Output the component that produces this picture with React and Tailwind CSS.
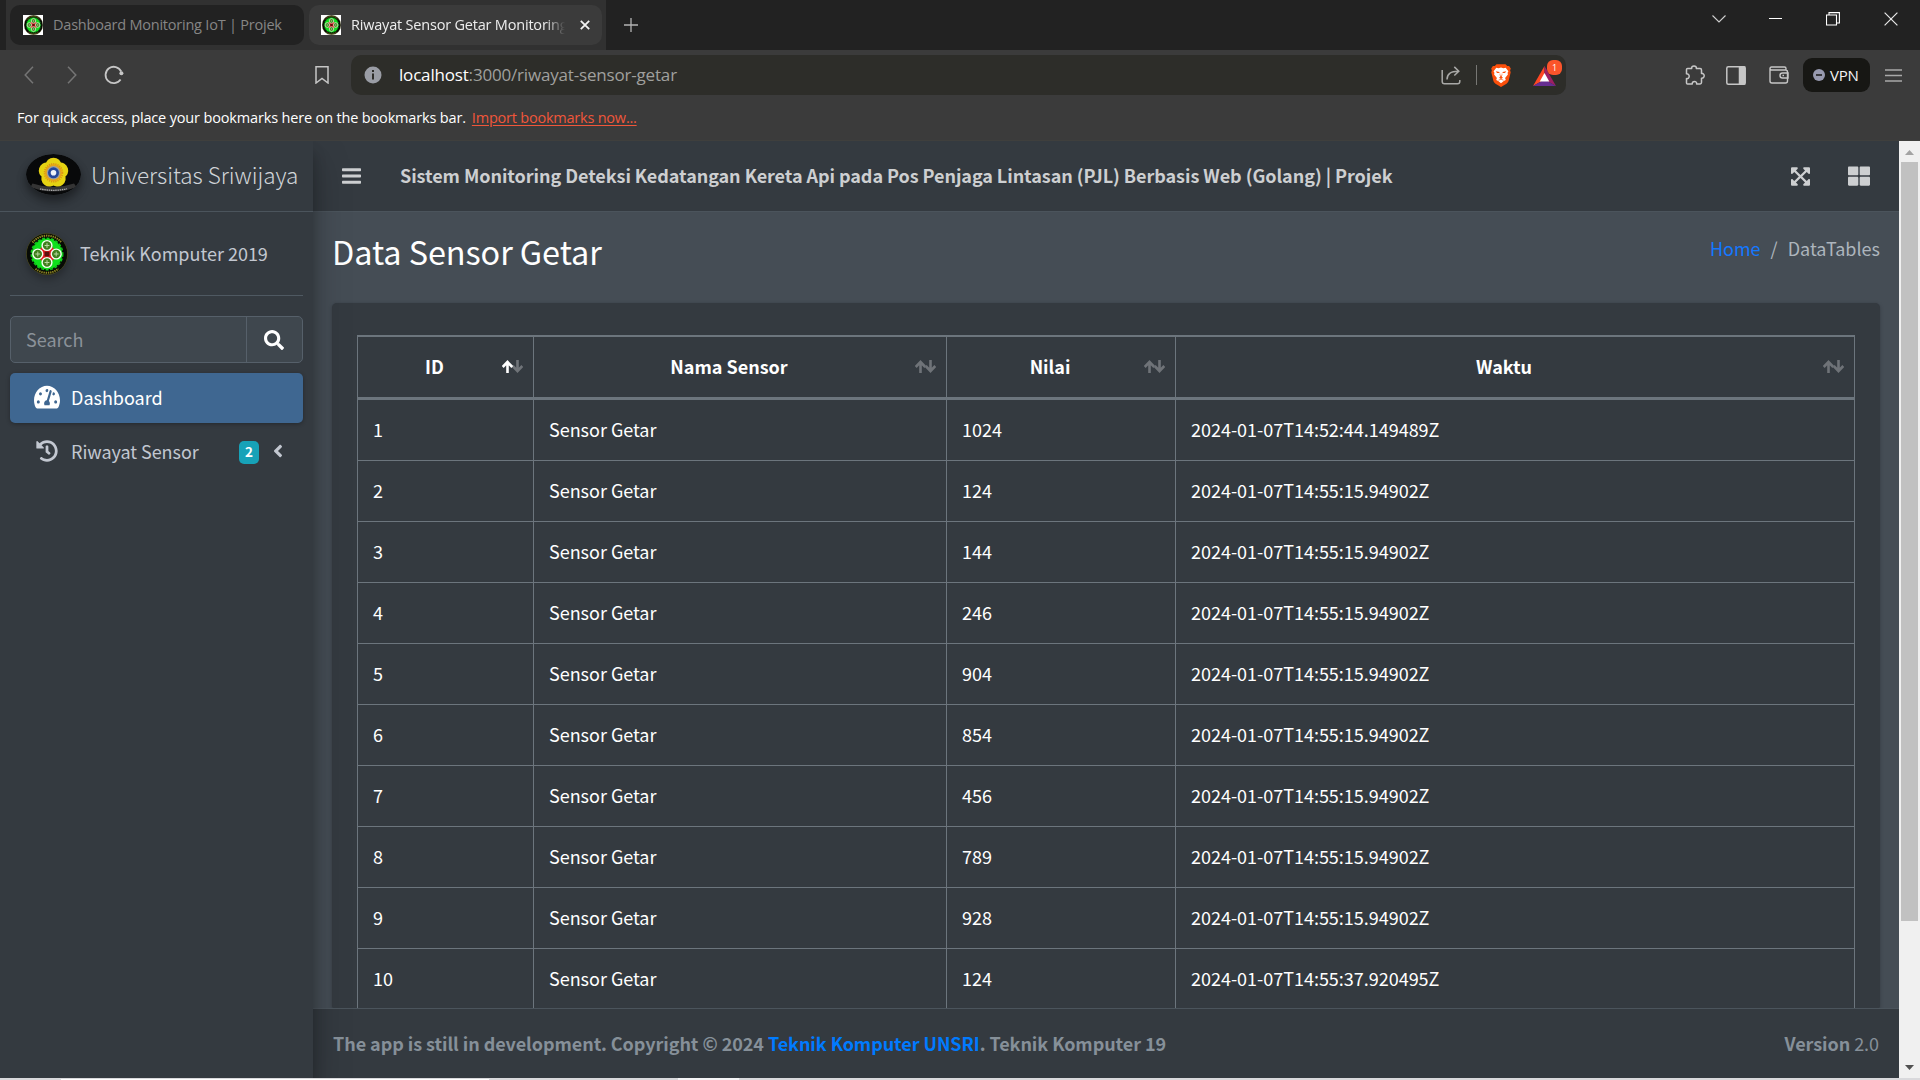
import React from "react";
import {
  FaBars,
  FaExpandArrowsAlt,
  FaThLarge,
  FaSearch,
  FaTachometerAlt,
  FaHistory,
  FaAngleLeft,
} from "react-icons/fa";

const SEGOE = "font-['Open_Sans','Noto_Sans',sans-serif]";
const SOURCE = "font-['Noto_Sans_CJK_SC',sans-serif]";

const ROWS = [
  ["1", "Sensor Getar", "1024", "2024-01-07T14:52:44.149489Z"],
  ["2", "Sensor Getar", "124", "2024-01-07T14:55:15.94902Z"],
  ["3", "Sensor Getar", "144", "2024-01-07T14:55:15.94902Z"],
  ["4", "Sensor Getar", "246", "2024-01-07T14:55:15.94902Z"],
  ["5", "Sensor Getar", "904", "2024-01-07T14:55:15.94902Z"],
  ["6", "Sensor Getar", "854", "2024-01-07T14:55:15.94902Z"],
  ["7", "Sensor Getar", "456", "2024-01-07T14:55:15.94902Z"],
  ["8", "Sensor Getar", "789", "2024-01-07T14:55:15.94902Z"],
  ["9", "Sensor Getar", "928", "2024-01-07T14:55:15.94902Z"],
  ["10", "Sensor Getar", "124", "2024-01-07T14:55:37.920495Z"],
];

const COLS = "grid grid-cols-[176px_413px_229px_679px]";

function DepartmentLogo({ className }) {
  const nodes = [
    [21, 12.5],
    [11.8, 21],
    [30.2, 21],
    [21, 29.5],
  ];
  return (
    <svg viewBox="0 0 42 42" preserveAspectRatio="none" className={className}>
      <circle cx="21" cy="21" r="20.7" fill="#070a05" stroke="#5f5c1a" strokeWidth="0.6" />
      <path d="M6.500 9.500a18.700 18.700 0 0 1 29 0" fill="none" stroke="#b3a52c" strokeWidth="2" strokeDasharray="1.400 .8" opacity="0.8" />
      <path d="M9.500 35.800a18.700 18.700 0 0 0 23 0" fill="none" stroke="#b3a52c" strokeWidth="2" strokeDasharray="1.400 .8" opacity="0.8" />
      <circle cx="21" cy="21" r="15.800" fill="none" stroke="#12c61b" strokeWidth="1.4" strokeDasharray="3 1.6" />
      <circle cx="21" cy="21" r="15.300" fill="#0fe01c" />
      <path d="M15 15 27 27M27 15 15 27" stroke="#e51b24" strokeWidth="4" />
      <rect x="16" y="16" width="10" height="10" fill="#e51b24" />
      {nodes.map(([x, y]) => (
        <g key={`${x}-${y}`}>
          <circle cx={x} cy={y} r="4.900" fill="#3f7f1c" stroke="#f5fff0" strokeWidth="1.400" />
          <path d={`M${x - 2.4} ${y}h4.8M${x} ${y - 2.4}v4.8`} stroke="#b9d8a0" strokeWidth="1" />
        </g>
      ))}
      <rect x="18.6" y="18.6" width="4.8" height="4.8" fill="#5c0f0c" />
    </svg>
  );
}

function Favicon() {
  return (
    <span className="flex h-5 w-5 shrink-0 items-center justify-center bg-white">
      <DepartmentLogo className="h-5 w-[19px]" />
    </span>
  );
}

function UniversityLogo() {
  return (
    <svg viewBox="0 0 55 41" className="h-[41px] w-[55px] rounded-[50%] shadow-[0_4px_8px_rgba(0,0,0,0.3),0_8px_12px_rgba(0,0,0,0.2)]">
      <ellipse cx="27.5" cy="20.5" rx="27.5" ry="20.5" fill="#08090a" />
      <path d="M6.500 29.500q21 7 41.500 0l2.500 3.500q-23 9-46 0z" fill="#343434" />
      {[0, 72, 144, 216, 288].map((a) => (
        <ellipse key={a} cx="27.5" cy="11" rx="7.800" ry="7.300" fill="#e6d312" transform={`rotate(${a} 27.5 18.8)`} />
      ))}
      <path d="M14 34.800q13 3 27 0" stroke="#a9a9a9" strokeWidth="1.300" strokeDasharray="1.500 .7" fill="none" />
      <circle cx="27.5" cy="18.8" r="8.500" fill="#e7a418" />
      <circle cx="27.5" cy="18.8" r="9" fill="none" stroke="#dd9316" strokeWidth="1.600" strokeDasharray="1.200 1" />
      <circle cx="27.5" cy="18.8" r="6.800" fill="#9aa0a0" />
      <circle cx="27.5" cy="18.8" r="5.500" fill="#24479c" />
      <circle cx="27.5" cy="18.8" r="2.800" fill="#eef2f8" />
    </svg>
  );
}

function BraveIcon() {
  return (
    <svg viewBox="0 0 20 23" className="ml-[14px] h-[23px] w-5">
      <path d="M5.500.3h9l1.700 1.800 1.900-.1 1.700 2.500-.7 1.900.6 1.800-2 8.400c-.4 1.500-1.100 2.300-2.200 3.100L10 23l-5.500-3.300c-1.100-.8-1.800-1.600-2.200-3.100L.3 8.200l.6-1.800-.7-1.900L1.900 2l1.900.1z" fill="#fb4f0b" />
      <path d="M5.300 3.700 7.600 4.200 10 3.500l2.400.7 2.300-.5 2.700 3.600-.8 1.500.3 1.700-2.800 3.600.7 1.900-2 .9-2.800 2.400-2.800-2.400-2-.9.700-1.900-2.800-3.600.3-1.700-.8-1.500z" fill="#fff" />
      <path d="M4.800 7.200 8.400 8v1L6 9zM15.200 7.200 11.600 8v1l2.400 0zM9 8.500 8.700 11l.6 1.700L8 13.700 10 15l2-1.300-1.300-1L11.300 11 11 8.500l-.4 3.300h-1.200z" fill="#fb4f0b" />
      <path d="m7.500 16.200 2.500-1 2.500 1" fill="none" stroke="#fb4f0b" strokeWidth=".7" />
    </svg>
  );
}

function TabStrip() {
  return (
    <div className={`flex h-[50px] bg-[#222222] pl-[6px] text-[14.5px] ${SEGOE}`}>
      <div className="flex w-[600px] items-start gap-[5px] bg-[#313131] pl-1 pt-[5px]">
        <div className="flex h-10 w-[294px] items-center rounded-[10px] bg-[#222222] pl-[13px]">
          <Favicon />
          <span className="ml-[10px] whitespace-nowrap tracking-[-0.22px] text-[#868686]">Dashboard Monitoring IoT | Projek</span>
        </div>
        <div className="flex h-10 w-[293px] items-center rounded-[10px] bg-[#3b3b3b] pl-3">
          <Favicon />
          <span className="ml-[10px] w-[214px] overflow-hidden whitespace-nowrap tracking-[-0.2px] text-[#ededed] [mask-image:linear-gradient(90deg,#000_91%,transparent)]">
            Riwayat Sensor Getar Monitoring
          </span>
          <svg viewBox="0 0 10 10" className="ml-[15px] h-[10px] w-[10px]" stroke="#f2f2f2" strokeWidth="1.8">
            <path d="M.8.8 9.2 9.2M9.2.8.8 9.2" />
          </svg>
        </div>
      </div>
      <svg viewBox="0 0 14 14" className="ml-[18px] mt-[18px] h-[14px] w-[14px]" stroke="#b4b4b4" strokeWidth="1.3">
        <path d="M7 0v14M0 7h14" />
      </svg>
      <div className="ml-auto flex h-[37px] items-center pr-[22px]">
        <svg viewBox="0 0 14 8" className="h-2 w-[14px]" fill="none" stroke="#d0d0d0" strokeWidth="1.1">
          <path d="M.5.5 7 7 13.500.5" />
        </svg>
        <span className="ml-[43px] h-px w-[13px] bg-white" />
        <svg viewBox="0 0 14 14" className="ml-[44px] h-[14px] w-[14px]" fill="none" stroke="#fff" strokeWidth="1.1">
          <path d="M.5 3h10v10H.5zM3 3V.6h10.400V11H11" />
        </svg>
        <svg viewBox="0 0 14 14" className="ml-[44px] h-[14px] w-[14px]" stroke="#e8e8e8" strokeWidth="1.2">
          <path d="M.6.6 13.400 13.400M13.400.6.6 13.400" />
        </svg>
      </div>
    </div>
  );
}

function Toolbar() {
  return (
    <div className={`flex h-[50px] items-center bg-[#3b3b3b] pr-[18px] ${SEGOE}`}>
      <svg viewBox="0 0 10 18" className="ml-6 h-[18px] w-[10px]" fill="none" stroke="#757575" strokeWidth="1.5">
        <path d="M9 .8 1.200 9 9 17.200" />
      </svg>
      <svg viewBox="0 0 10 18" className="ml-[33px] h-[18px] w-[10px]" fill="none" stroke="#757575" strokeWidth="1.500">
        <path d="M1 .8 8.800 9 1 17.200" />
      </svg>
      <svg viewBox="0 0 20 20" className="ml-[27px] h-5 w-5" fill="none" stroke="#c6c6c6" strokeWidth="1.800">
        <path d="M16.600 14.500A8.200 8.200 0 1 1 17.200 6.500" />
        <circle cx="17.400" cy="8.300" r="2" fill="#c6c6c6" stroke="none" />
      </svg>
      <svg viewBox="0 0 14 18" className="ml-[191px] h-[18px] w-[14px]" fill="none" stroke="#c6c6c6" strokeWidth="1.500">
        <path d="M1 .8h12v16.200l-6-4.500-6 4.500z" />
      </svg>
      <div className="ml-[22px] flex h-10 w-[1215px] items-center rounded-[10px] bg-[#2d2d29] pl-[13px] pr-1">
        <svg viewBox="0 0 18 18" className="h-[18px] w-[18px]">
          <circle cx="9" cy="9" r="8.500" fill="#9a9da5" />
          <path d="M9 4v2M9 7.500v6" stroke="#2d2d29" strokeWidth="2" />
        </svg>
        <span className="ml-[17px] whitespace-nowrap text-[17px] tracking-[-0.18px] text-[#a0a09e]">
          <span className="text-white">localhost</span>:3000/riwayat-sensor-getar
        </span>
        <svg viewBox="0 0 20 19" className="ml-auto h-[19px] w-5" fill="none" stroke="#a9a9a7" strokeWidth="1.500">
          <path d="M1.200 4v11.500q0 2.300 2.300 2.300h13q2.300 0 2.300-2.300V14" />
          <path d="M6 13.500C6 8 9.500 5.200 17.500 5.200M13.300.9l4.500 4.300-4.500 4.300" />
        </svg>
        <span className="ml-[15px] h-5 w-[1.5px] bg-[#777774]" />
        <BraveIcon />
        <span className="relative ml-[22px] h-[23px] w-[29px]">
          <svg viewBox="0 0 23 20" className="mt-[2px] h-5 w-[23px]">
            <path d="M11.500 0 0 20 11.500 13.500z" fill="#ff4724" />
            <path d="M11.500 0 23 20 11.500 13.500z" fill="#9e1f63" />
            <path d="M0 20h23l-11.500-6.500z" fill="#662d91" />
            <path d="M11.500 7 6.700 15.500h9.600z" fill="#fff" />
          </svg>
          <span className="absolute -top-[4px] left-[14px] flex h-[15px] w-[15px] items-center justify-center rounded-[6px] bg-[#fb542b] text-[9px] leading-none text-white">1</span>
        </span>
      </div>
      <svg viewBox="0 0 20 20" className="ml-auto h-5 w-5" fill="none" stroke="#c6c6c6" strokeWidth="1.500" strokeLinejoin="round">
        <path d="M1.500 4.500q0-1 1-1h4.200C6.300 2 7.500.9 9 .9s2.700 1.100 2.300 2.600h3.800q1.400 0 1.400 1.400v3.500c1.500-.2 2.700.9 2.700 2.400s-1.200 2.600-2.700 2.400v4.300q0 1.400-1.400 1.400h-3.500c.3-1.400-.7-2.500-2.100-2.500s-2.500 1.100-2.200 2.500H2.500q-1 0-1-1v-4.300c1.600.2 2.700-.8 2.700-2.300S3.100 8.600 1.500 8.800z" />
      </svg>
      <svg viewBox="0 0 20 19" className="ml-[21px] h-[19px] w-5" fill="none" stroke="#c6c6c6" strokeWidth="1.500">
        <rect x=".8" y=".8" width="18.400" height="17.400" rx="1.500" />
        <path d="M13.500 1h5v17h-5z" fill="#c6c6c6" />
      </svg>
      <svg viewBox="0 0 20 18" className="ml-[23px] h-[18px] w-5" fill="none" stroke="#c6c6c6" strokeWidth="1.400">
        <path d="M1 2.500v12.500q0 2 2 2h13.500q2 0 2-2V6q0-2-2-2H2.500Q1 4 1 2.500T2.500 1h13q1.500 0 1.500 1.500V4" />
        <path d="M19 7h-5.500q-2.500 0-2.500 2.500t2.500 2.500H19zM13.500 9.500h1.500" />
      </svg>
      <div className="ml-[14px] flex h-[34px] w-[67px] items-center rounded-[9px] bg-[#171714] pl-[10px]">
        <svg viewBox="0 0 12 12" className="h-3 w-3">
          <circle cx="6" cy="6" r="6" fill="#9799ae" />
          <path d="M3 6h6" stroke="#171714" strokeWidth="1.500" />
        </svg>
        <span className="ml-[5px] text-[15px] tracking-[-0.2px] text-[#f4f4f4]">VPN</span>
      </div>
      <svg viewBox="0 0 17 13" className="ml-[15px] h-[13px] w-[17px]" stroke="#a9a9a9" strokeWidth="1.500">
        <path d="M0 1h17M0 6.500h17M0 12h17" />
      </svg>
    </div>
  );
}

function BookmarksBar() {
  return (
    <div className={`flex h-[41px] items-start whitespace-nowrap border-b border-[#3f3f3d] bg-[#3b3b3b] pl-[17px] pt-2 text-[14.5px] leading-5 text-white ${SEGOE}`}>
      <span className="tracking-[-0.16px]">For quick access, place your bookmarks here on the bookmarks bar.</span>
      <span className="ml-[6px] tracking-[-0.22px] text-[#f0563a] underline underline-offset-2">Import bookmarks now...</span>
    </div>
  );
}

function Sidebar() {
  return (
    <aside className="relative z-10 flex w-[313px] shrink-0 flex-col bg-[#343a40] shadow-[0_18px_35px_rgba(0,0,0,0.25),0_12px_12px_rgba(0,0,0,0.22)]">
      <div className="flex h-[71px] items-start border-b border-[#4b545c] pl-[26px] pt-[13px]">
        <UniversityLogo />
        <span className="ml-[10px] mt-px whitespace-nowrap text-[22.5px] font-light leading-[38px] tracking-[-0.02px] text-[#d0d4d8]">Universitas Sriwijaya</span>
      </div>
      <div className="mx-[10px] flex h-[84px] items-center border-b border-[#4f5962] pl-4">
        <DepartmentLogo className="h-[42px] w-[42px] rounded-full shadow-[0_4px_8px_rgba(0,0,0,0.3)]" />
        <span className="-mt-0.5 ml-3 whitespace-nowrap text-[18px] leading-6 text-[#c2c7d0]">Teknik Komputer 2019</span>
      </div>
      <div className="mx-[10px] mt-5 flex h-[47px] rounded-[5px] border border-[#56606a] bg-[#3f474e]">
        <span className="flex w-[236px] items-center border-r border-[#56606a] pb-0.5 pl-[15px] text-[18px] leading-6 text-[#8b9299]">Search</span>
        <span className="flex flex-1 items-center justify-center pr-0.5">
          <FaSearch className="h-5 w-5 text-white" />
        </span>
      </div>
      <nav className="mx-[10px] mt-[10px] flex flex-col text-[18px] leading-6">
        <span className="flex h-[50px] items-center rounded-[5px] bg-[#3f6791] pb-0.5 pl-6 text-white shadow-[0_1px_4px_rgba(0,0,0,0.3)]">
          <FaTachometerAlt className="h-[26px] w-[26px]" preserveAspectRatio="none" />
          <span className="ml-[11px]">Dashboard</span>
        </span>
        <span className="mt-1 flex h-[50px] items-center pb-0.5 pl-[26px] text-[#c2c7d0]">
          <FaHistory className="h-[22px] w-[22px]" />
          <span className="ml-[13px] whitespace-nowrap tracking-[-0.05px]">Riwayat Sensor</span>
          <span className="ml-auto mt-0.5 flex h-[23px] w-5 items-center justify-center rounded-[5px] bg-[#17a2b8] text-[13.5px] font-bold leading-none text-white">2</span>
          <FaAngleLeft className="ml-[9px] mr-[15px] h-5 w-5" />
        </span>
      </nav>
    </aside>
  );
}

function SortArrows({ active }) {
  return (
    <svg viewBox="0 0 21 13" className="absolute right-[10px] top-[23px] h-[13px] w-[21px]" fill="none" strokeWidth="2.600">
      <path d="M15.500 0v10.500M10.700 6l4.800 5 4.800-5" stroke="#6f7378" />
      <path d="M5.500 13V2.500M.7 7l4.800-5 4.800 5" stroke={active ? "#ffffff" : "#6f7378"} />
    </svg>
  );
}

function DataTable() {
  return (
    <div className="w-[1498px] border-l border-[#6c757d] text-[18px] leading-6 text-white">
      <div className={`${COLS} h-[65px] border-b-[3px] border-t-2 border-[#6c757d]`}>
        {["ID", "Nama Sensor", "Nilai", "Waktu"].map((h, i) => (
          <div key={h} className="relative flex items-center justify-center border-r border-[#6c757d] pb-0.5 pr-[22px] font-bold">
            {h}
            <SortArrows active={i === 0} />
          </div>
        ))}
      </div>
      {ROWS.map((r) => (
        <div key={r[0]} className={`${COLS} h-[61px] border-b border-[#6c757d]`}>
          {r.map((c, i) => (
            <div key={i} className="flex items-center border-r border-[#6c757d] pb-0.5 pl-[15px] tracking-[-0.02px]">
              {c}
            </div>
          ))}
        </div>
      ))}
    </div>
  );
}

function Content() {
  return (
    <div className="flex min-w-0 flex-1 flex-col bg-[#454d55]">
      <header className="flex h-[71px] shrink-0 items-center border-b border-[#4b545c] bg-[#343a40] pl-[29px] pr-[29px] text-[#cdcfd1]">
        <FaBars className="h-[20px] w-[19px]" preserveAspectRatio="none" />
        <span className="-mt-0.5 ml-[39px] whitespace-nowrap text-[18px] font-bold leading-6 tracking-[-0.055px]">
          Sistem Monitoring Deteksi Kedatangan Kereta Api pada Pos Penjaga Lintasan (PJL) Berbasis Web (Golang) | Projek
        </span>
        <FaExpandArrowsAlt className="ml-auto h-[21px] w-[19px]" preserveAspectRatio="none" />
        <FaThLarge className="ml-[38px] h-[22px] w-[22px]" preserveAspectRatio="none" />
      </header>
      <main className="flex min-h-0 flex-1 flex-col overflow-hidden pl-[19px] pr-[19px]">
        <div className="flex h-[91px] shrink-0 items-start justify-between pt-[15px]">
          <h1 className="text-[32.4px] leading-[48px] tracking-[-0.06px] text-white">Data Sensor Getar</h1>
          <div className="flex gap-[10px] pt-[9px] text-[18px] leading-6 text-[#adb5bd]">
            <span className="text-[#1478ff]">Home</span>
            <span>/</span>
            <span>DataTables</span>
          </div>
        </div>
        <section className="shrink-0 rounded-[5px] bg-[#343a40] pl-[25px] pt-8 shadow-[0_0_1px_rgba(0,0,0,0.125),0_1px_4px_rgba(0,0,0,0.2)]">
          <DataTable />
        </section>
      </main>
      <footer className="flex h-[70px] shrink-0 items-center justify-between border-t border-[#4b545c] bg-[#343a40] px-5 pb-0.5 text-[18px] leading-6 tracking-[-0.055px] text-[#869099]">
        <span className="whitespace-nowrap font-bold">
          The app is still in development. Copyright © 2024 <span className="text-[#007bff]">Teknik Komputer UNSRI</span>. Teknik Komputer 19
        </span>
        <span className="whitespace-nowrap">
          <span className="font-bold">Version</span> 2.0
        </span>
      </footer>
    </div>
  );
}

function Scrollbar() {
  return (
    <div className="flex w-[21px] shrink-0 flex-col items-center bg-[#f0f0f0]">
      <svg viewBox="0 0 9 5" className="mt-[9px] h-[5px] w-[9px] shrink-0">
        <path d="M0 5 4.500 0 9 5z" fill="#a3a3a3" />
      </svg>
      <span className="mt-[7px] h-[759px] w-[17px] shrink-0 bg-[#c1c1c1]" />
      <svg viewBox="0 0 9 5" className="mb-2 mt-auto h-[5px] w-[9px] shrink-0">
        <path d="M0 0 4.500 5 9 0z" fill="#505050" />
      </svg>
    </div>
  );
}

function TaskbarEdge() {
  return (
    <div className="flex h-[2px] items-end bg-[#d9d9dc]">
      <span className="ml-[61px] h-px w-[428px] bg-white" />
      <span className="ml-[189px] h-[2px] w-[61px] bg-[#f4f4f6]" />
    </div>
  );
}

export default function App() {
  return (
    <div className="flex h-[1080px] w-[1920px] flex-col overflow-hidden bg-[#3b3b3b]">
      <TabStrip />
      <Toolbar />
      <BookmarksBar />
      <div className={`flex h-[937px] overflow-hidden ${SOURCE}`}>
        <Sidebar />
        <Content />
        <Scrollbar />
      </div>
      <TaskbarEdge />
    </div>
  );
}
